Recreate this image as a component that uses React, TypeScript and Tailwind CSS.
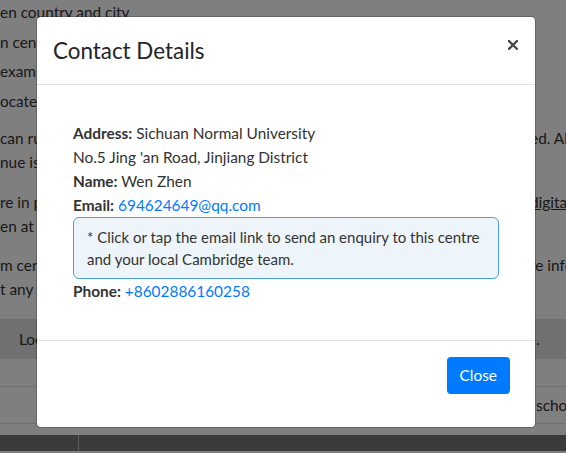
import React from "react";

const font = { fontFamily: "Lato, 'Noto Sans', sans-serif" };

function Row({ left, right, cls = "" }: { left: React.ReactNode; right?: React.ReactNode; cls?: string }) {
  return (
    <div className={"flex h-6 items-center justify-between whitespace-nowrap " + cls}>
      <div className="w-[40px] overflow-hidden">{left}</div>
      <div className="w-[36px] shrink-0 overflow-hidden">{right}</div>
    </div>
  );
}

export default function App() {
  return (
    <div className="relative h-[453px] w-[566px] overflow-hidden bg-white text-[15.4px] leading-6 text-[#333]" style={font}>
      {/* background page */}
      <div className="flex flex-col">
        <div className="h-6 whitespace-nowrap">en country and city</div>
        <Row cls="mt-[5.5px]" left="n centre finder" />
        <Row cls="mt-[5.5px]" left="exam centre" />
        <Row cls="mt-[5.5px]" left="ocate the" />
        <Row cls="mt-[13.5px]" left="can run" right="ed. Always" />
        <Row left="nue is" />
        <Row cls="mt-4" left="re in person" right={<span> <span className="underline">digital</span></span>} />
        <Row left="en at a" />
        <Row cls="mt-[15px]" left="m centre" right="re information" />
        <Row left="t any point" />
        <div className="mt-[18px] flex h-10 items-center justify-between whitespace-nowrap bg-[#e0e0e0] pl-[19px]">
          <div className="w-[21px] overflow-hidden">Location</div>
          <div className="w-[30px] overflow-hidden">. </div>
        </div>
        <div className="h-[28px] border-b border-[#dee2e6]" />
        <div className="flex h-[37px] items-center justify-end border-b border-[#dee2e6] whitespace-nowrap">
          <div className="w-[30px] overflow-hidden">schools</div>
        </div>
        <div className="h-[11px]" />
        <div className="flex h-4 bg-[#747679]">
          <div className="w-[79px] border-r border-[#bbbbbb]" />
        </div>
      </div>

      {/* overlay */}
      <div className="absolute inset-0 bg-black/50" />

      {/* modal */}
      <div className="absolute left-[36px] top-[16px] flex h-[412px] w-[500px] flex-col rounded-[5px] border border-black/20 bg-white bg-clip-padding">
        <div className="flex h-[68px] items-start justify-between border-b border-[#dee2e6] px-4 pt-4">
          <h4 className="text-[22.4px] leading-9 text-[#212529]">Contact Details</h4>
          <button className="mt-[7px] mr-[1px]" aria-label="Close">
            <svg width="10" height="10" viewBox="0 0 10 10">
              <path d="M1 1L9 9M9 1L1 9" stroke="#4a4a4a" strokeWidth="2.4" strokeLinecap="square" />
            </svg>
          </button>
        </div>
        <div className="flex-1 p-4">
          <div className="px-5 pt-5">
            <div><b>Address:</b> Sichuan Normal University</div>
            <div>No.5 Jing 'an Road, Jinjiang District</div>
            <div><b>Name:</b> Wen Zhen</div>
            <div>
              <b>Email:</b> <a href="#" className="text-[#007bff]">694624649@qq.com</a>
            </div>
            <div className="w-[426px] rounded-[6px] border border-[#4aa0e0] bg-[#eef5fa] px-[13px] py-2 text-[15px] leading-[22px]">
              * Click or tap the email link to send an enquiry to this centre and your local Cambridge team.
            </div>
            <div>
              <b>Phone:</b> <a href="#" className="text-[#007bff]">+8602886160258</a>
            </div>
          </div>
        </div>
        <div className="flex h-[87px] items-start justify-end border-t border-[#dee2e6] pr-[25px] pt-4">
          <button className="rounded-[4px] bg-[#007bff] px-[13px] py-[6px] leading-[25px] text-white">Close</button>
        </div>
      </div>
    </div>
  );
}
